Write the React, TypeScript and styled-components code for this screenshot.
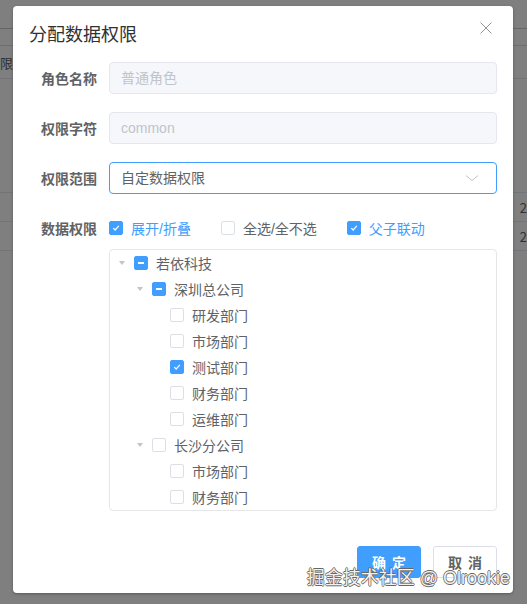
import React from "react";
import styled, { createGlobalStyle } from "styled-components";

const Global = createGlobalStyle`
  html, body { margin: 0; padding: 0; }
  body {
    width: 527px; height: 604px; overflow: hidden; background: #fff;
    font-family: "Liberation Sans", "Noto Sans CJK SC", sans-serif;
  }
`;

const Page = styled.div`
  position: relative;
  width: 527px;
  height: 604px;
  overflow: hidden;
  background: #fff;
`;

const BgHeader = styled.div`
  height: 28px;
  border-bottom: 1px solid #c8ccd4;
`;

const BgBar = styled.div`
  height: 16px;
  border-bottom: 1px solid #d8dce5;
`;

const BgRow = styled.div<{ $h: number }>`
  height: ${(p) => p.$h}px;
  border-bottom: 1px solid #e6e8ee;
  display: flex;
  align-items: center;
  justify-content: space-between;
  font-size: 13px;
  color: #606266;
  font-family: "Noto Sans CJK SC", sans-serif;
`;

const BgCut = styled.span`
  margin-left: -13px;
`;

const Overlay = styled.div`
  position: absolute;
  inset: 0;
  background: rgba(0, 0, 0, 0.5);
`;

const Dialog = styled.div`
  position: absolute;
  left: 13px;
  top: 6px;
  width: 500px;
  height: 587px;
  background: #fff;
  border-radius: 4px;
  box-shadow: 0 1px 3px rgba(0,0,0,.3);
  display: flex;
  flex-direction: column;
  box-sizing: border-box;
`;

const Header = styled.div`
  padding: 15px 16px 10px;
  position: relative;
`;

const Title = styled.div`
  font-size: 18px;
  line-height: 24px;
  color: #303133;
  font-family: "Noto Sans CJK SC", sans-serif;
`;

const Close = styled.button`
  position: absolute;
  top: 16px;
  right: 21px;
  width: 12px;
  height: 12px;
  padding: 0;
  border: 0;
  background: none;
  display: flex;
`;

const Body = styled.div`
  padding: 7px 16px 0;
  flex: 1;
`;

const Item = styled.div`
  display: flex;
  margin-bottom: 18px;
`;

const Label = styled.label`
  width: 80px;
  flex: none;
  box-sizing: border-box;
  padding-right: 12px;
  text-align: right;
  font-size: 14px;
  line-height: 32px;
  font-weight: 700;
  color: #606266;
  font-family: "Noto Sans CJK SC", sans-serif;
`;

const Content = styled.div`
  flex: 1;
  min-width: 0;
`;

const Input = styled.div<{ $disabled?: boolean; $focus?: boolean }>`
  height: 32px;
  box-sizing: border-box;
  border: 1px solid ${(p) => (p.$focus ? "#409eff" : "#e4e7ed")};
  background: ${(p) => (p.$disabled ? "#f5f7fa" : "#fff")};
  color: ${(p) => (p.$disabled ? "#c0c4cc" : "#606266")};
  border-radius: 4px;
  padding: 0 11px;
  font-size: 14px;
  line-height: 30px;
  display: flex;
  align-items: center;
  justify-content: space-between;
`;

const Checks = styled.div`
  display: flex;
  align-items: center;
  height: 32px;
`;

const CheckItem = styled.span<{ $on?: boolean }>`
  display: inline-flex;
  align-items: center;
  margin-right: 30px;
  font-size: 14px;
  color: ${(p) => (p.$on ? "#409eff" : "#606266")};
  font-family: "Liberation Sans", "Noto Sans CJK SC", sans-serif;
`;

const Box = styled.span<{ $on?: boolean; $half?: boolean }>`
  width: 14px;
  height: 14px;
  box-sizing: border-box;
  border-radius: 2px;
  border: 1px solid ${(p) => (p.$on || p.$half ? "#409eff" : "#dcdfe6")};
  background: ${(p) => (p.$on || p.$half ? "#409eff" : "#fff")};
  display: inline-flex;
  align-items: center;
  justify-content: center;
  flex: none;
  margin-right: 8px;
`;

const HalfBar = styled.span`
  width: 6px;
  height: 2px;
  background: #fff;
`;

const Tree = styled.div`
  margin-top: 5px;
  border: 1px solid #e5e6e7;
  border-radius: 4px;
`;

const Node = styled.div<{ $level: number }>`
  height: 26px;
  display: flex;
  align-items: center;
  padding-left: ${(p) => (p.$level - 1) * 18}px;
  font-size: 14px;
  color: #606266;
  font-family: "Noto Sans CJK SC", sans-serif;
`;

const Caret = styled.span<{ $hidden?: boolean }>`
  width: 24px;
  height: 26px;
  display: flex;
  align-items: center;
  justify-content: center;
  visibility: ${(p) => (p.$hidden ? "hidden" : "visible")};
`;

const Footer = styled.div`
  padding: 16px 16px 15px;
  display: flex;
  justify-content: flex-end;
  gap: 12px;
`;

const Button = styled.button<{ $primary?: boolean }>`
  height: 32px;
  width: 64px;
  box-sizing: border-box;
  border-radius: 3px;
  border: 1px solid ${(p) => (p.$primary ? "#409eff" : "#dcdfe6")};
  background: ${(p) => (p.$primary ? "#409eff" : "#fff")};
  color: ${(p) => (p.$primary ? "#fff" : "#606266")};
  font-size: 14px;
  font-weight: 700;
  font-family: "Liberation Sans", "Noto Sans CJK SC", sans-serif;
  padding: 0;
  word-spacing: 2px;
`;

const Watermark = styled.div`
  position: absolute;
  right: 17px;
  top: 566px;
  font-size: 18px;
  line-height: 24px;
  color: #f2f2f2;
  font-family: "Liberation Sans", "Noto Sans CJK SC", sans-serif;
  text-shadow: 0.8px 0 0 #666, -0.8px 0 0 #666, 0 0.8px 0 #666, 0 -0.8px 0 #666;
  white-space: pre;
`;

const Check = () => (
  <svg width="10" height="10" viewBox="0 0 10 10">
    <path d="M2.3 5.1 L4.2 7 L7.8 2.9" fill="none" stroke="#fff" strokeWidth="1.2" />
  </svg>
);

type CB = "on" | "off" | "half";

const CheckBox = ({ s }: { s: CB }) => (
  <Box $on={s === "on"} $half={s === "half"}>
    {s === "on" && <Check />}
    {s === "half" && <HalfBar />}
  </Box>
);

const nodes: { level: number; label: string; state: CB; leaf?: boolean }[] = [
  { level: 1, label: "若依科技", state: "half" },
  { level: 2, label: "深圳总公司", state: "half" },
  { level: 3, label: "研发部门", state: "off", leaf: true },
  { level: 3, label: "市场部门", state: "off", leaf: true },
  { level: 3, label: "测试部门", state: "on", leaf: true },
  { level: 3, label: "财务部门", state: "off", leaf: true },
  { level: 3, label: "运维部门", state: "off", leaf: true },
  { level: 2, label: "长沙分公司", state: "off" },
  { level: 3, label: "市场部门", state: "off", leaf: true },
  { level: 3, label: "财务部门", state: "off", leaf: true },
];

export default function App() {
  return (
    <Page>
      <Global />
      <BgHeader />
      <BgBar />
      <BgRow $h={32}><BgCut>权限</BgCut></BgRow>
      <BgRow $h={113} />
      <BgRow $h={28}><span /> <span>2</span></BgRow>
      <BgRow $h={28}><span /> <span>2</span></BgRow>
      <Overlay />
      <Dialog>
        <Header>
          <Title>分配数据权限</Title>
          <Close aria-label="close">
            <svg width="12" height="12" viewBox="0 0 12 12">
              <path d="M0.5 0.5 L11.5 11.5 M11.5 0.5 L0.5 11.5" stroke="#909399" strokeWidth="1" />
            </svg>
          </Close>
        </Header>
        <Body>
          <Item>
            <Label>角色名称</Label>
            <Content>
              <Input $disabled>普通角色</Input>
            </Content>
          </Item>
          <Item>
            <Label>权限字符</Label>
            <Content>
              <Input $disabled>common</Input>
            </Content>
          </Item>
          <Item>
            <Label>权限范围</Label>
            <Content>
              <Input $focus>
                <span>自定数据权限</span>
                <svg width="14" height="8" viewBox="0 0 14 8" style={{ marginRight: 6 }}>
                  <path d="M1 1.5 L7 6.5 L13 1.5" fill="none" stroke="#c0c4cc" strokeWidth="1" />
                </svg>
              </Input>
            </Content>
          </Item>
          <Item>
            <Label>数据权限</Label>
            <Content>
              <Checks>
                <CheckItem $on><CheckBox s="on" />展开/折叠</CheckItem>
                <CheckItem><CheckBox s="off" />全选/全不选</CheckItem>
                <CheckItem $on><CheckBox s="on" />父子联动</CheckItem>
              </Checks>
              <Tree>
                {nodes.map((n, i) => (
                  <Node key={i} $level={n.level}>
                    <Caret $hidden={n.leaf}>
                      <svg width="8" height="6" viewBox="0 0 8 6">
                        <path d="M1 1 L7 1 L4 5 Z" fill="#c0c4cc" />
                      </svg>
                    </Caret>
                    <CheckBox s={n.state} />
                    {n.label}
                  </Node>
                ))}
              </Tree>
            </Content>
          </Item>
        </Body>
        <Footer>
          <Button $primary>确 定</Button>
          <Button>取 消</Button>
        </Footer>
      </Dialog>
      <Watermark>掘金技术社区 @ Olrookie</Watermark>
    </Page>
  );
}
